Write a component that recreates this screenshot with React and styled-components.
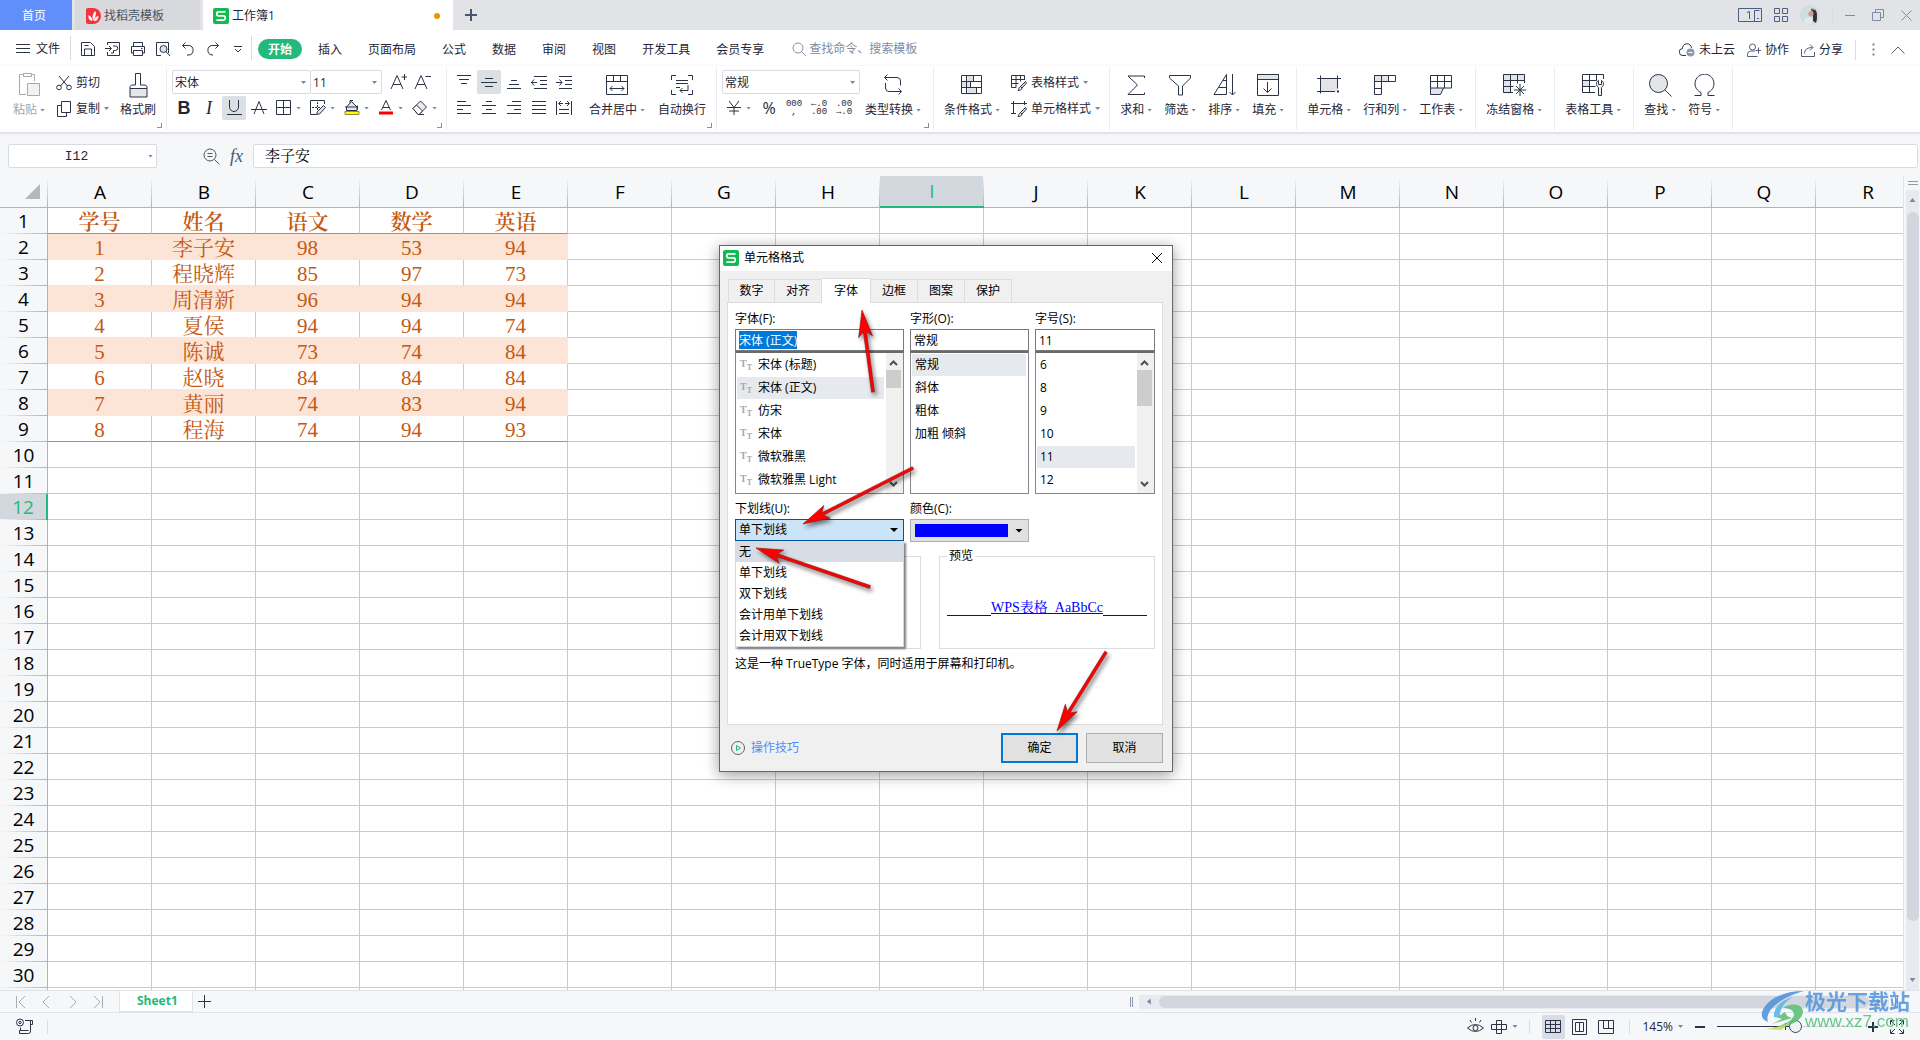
import { useEffect, useRef } from "react";
import styled, { createGlobalStyle, css } from "styled-components";

const ui = `"Open Sans", "Noto Sans CJK SC", sans-serif`;
const song = `"Liberation Serif", "Noto Serif CJK SC", "Noto Sans CJK SC", serif`;

const COLUMNS = "ABCDEFGHIJKLMNOPQR".split("");
const ROW_COUNT = 30;
const SCORES = [
  ["学号", "姓名", "语文", "数学", "英语"],
  ["1", "李子安", "98", "53", "94"],
  ["2", "程晓辉", "85", "97", "73"],
  ["3", "周清新", "96", "94", "94"],
  ["4", "夏侯", "94", "94", "74"],
  ["5", "陈诚", "73", "74", "84"],
  ["6", "赵晓", "84", "84", "84"],
  ["7", "黄丽", "74", "83", "94"],
  ["8", "程海", "74", "94", "93"],
];
const MENUS = ["开始", "插入", "页面布局", "公式", "数据", "审阅", "视图", "开发工具", "会员专享"];
const FONTS = ["宋体 (标题)", "宋体 (正文)", "仿宋", "宋体", "微软雅黑", "微软雅黑 Light"];
const STYLES = ["常规", "斜体", "粗体", "加粗 倾斜"];
const SIZES = ["6", "8", "9", "10", "11", "12"];
const UNDERLINES = ["无", "单下划线", "双下划线", "会计用单下划线", "会计用双下划线"];
const DIALOG_TABS = ["数字", "对齐", "字体", "边框", "图案", "保护"];

export default function App() {
  return (
    <Page>
      <GlobalStyle />
      <TitleBar />
      <MenuBar />
      <Ribbon />
      <FormulaBar />
      <Workspace>
        <Sheet />
        <VerticalScroll />
      </Workspace>
      <SheetTabs />
      <StatusBar />
      <FormatDialog />
      <Watermark />
    </Page>
  );
}

/* ---------- icons ---------- */

function Icon({ w = 16, h, children, color = "#2b3347" }) {
  const height = h || w;
  return (
    <Svg width={w} height={height} viewBox={`0 0 ${w} ${height}`} stroke={color} aria-hidden="true">
      {children}
    </Svg>
  );
}

const SaveIcon = () => (
  <Icon>
    <path d="M1.5 1.5h9l4 4v9h-13z M4.5 14v-6h7v6 M4.5 4.5h4" />
  </Icon>
);
const ExportIcon = () => (
  <Icon>
    <path d="M2.5 4V1.5h12v13h-12V11 M0 7.500h6 M4 5l2.500 2.500L4 10 M8 5h2.500a2 2 0 0 1 0 4.500H8.500V12H6" />
  </Icon>
);
const PrintIcon = () => (
  <Icon>
    <path d="M3.500 5V1.500h9V5 M3.500 12h-2V5.500h13V12h-2 M3.500 9.500h9v5h-9z M11 7.500h1.500" />
  </Icon>
);
const PreviewIcon = () => (
  <Icon>
    <path d="M6 14.500H1.500v-13h12V12" />
    <circle cx="8.500" cy="8" r="3.500" fill="#dfe2e8" />
    <path d="M11 10.500l4 4.500" />
  </Icon>
);
const UndoIcon = () => (
  <Icon>
    <path d="M5.500 1.500l-3 3 3 3 M2.500 4.500h6.500a4.800 4.800 0 0 1 0 9.500H7" />
  </Icon>
);
const RedoIcon = () => (
  <Icon>
    <path d="M10.500 1.500l3 3-3 3 M13.500 4.500H7a4.800 4.800 0 0 0 0 9.500h1" />
  </Icon>
);
const MoreIcon = () => (
  <Icon w={8}>
    <path d="M0 1.500h8 M1 4l3 3 3-3" />
  </Icon>
);
const PasteIcon = () => (
  <Icon w={22} h={24} color="#a9a9a9">
    <path d="M8 21.500H1.500v-20H5 M13 1.500h3.500V8" />
    <path d="M5.500 3.500v-3h8v3z" />
    <path d="M9.500 10.500h12v12h-12z" fill="#f2f2f2" />
  </Icon>
);
const CutIcon = () => (
  <Icon>
    <path d="M3 1l8.500 10 M13 1L4.500 11" />
    <circle cx="3" cy="12.500" r="2.300" />
    <circle cx="13" cy="12.500" r="2.300" />
  </Icon>
);
const CopyIcon = () => (
  <Icon>
    <path d="M5.500 0.500h9v11h-9z M5.500 4.500h-4v11h9v-4" />
  </Icon>
);
const BrushIcon = () => (
  <Icon w={19} h={25}>
    <path d="M1 15.500h17v8.500H1z" fill="#e4e6ea" />
    <path d="M1 15.500v-2l1.500-1.500H6.500V0.500h5V12H16l2 1.500v2" />
  </Icon>
);
const BordersIcon = () => (
  <Icon>
    <path d="M0.500 0.500h14v14h-14z M7.500 0.500v14 M0.500 7.500h14" />
  </Icon>
);
const DrawBorderIcon = () => (
  <Icon>
    <path d="M14.500 4V0.500h-14v14H6" />
    <path d="M7.500 2v8 M2 7.500h8" strokeDasharray="2 1" />
    <path d="M13.500 5.500l2 2-6 6.500-3 .5 1-3z" fill="#dfe2e8" />
  </Icon>
);
const FillIcon = () => (
  <Icon>
    <path d="M7.500 1.500l5.500 5.500v3.500H2.500V7z" fill="#e4e6ea" />
    <path d="M1 7h11.500 M6 3V0.500h3 M13.500 5.500v4" />
    <path d="M1 11.500h14v3H1z" fill="#ffff00" stroke="#8b8b45" />
  </Icon>
);
const EraserIcon = () => (
  <Icon>
    <path d="M1 8.500l7.500-7.500 6 6-7.500 7.500H6z" fill="#e8eaed" />
    <path d="M1 8.500l3.500-3.500 6 6-3.500 3.500H6z" fill="#fff" />
    <path d="M6 14.500h6" />
  </Icon>
);
const GrowIcon = ({ minus }) => (
  <Icon w={18}>
    <path d="M2 16L8 2.500 14 16 M4 11.500h8" />
    <path d={minus ? "M12.500 3.500H18" : "M12.500 4h5.500 M15.500 1v6"} />
  </Icon>
);
const lines = {
  top: "M1 1.500h14 M3 5.500h10 M5 9.500h6",
  middle: "M4 4.500h8 M0 8.500h16 M4 12.500h8",
  bottom: "M5 6.500h6 M3 10.500h10 M1 14.500h14",
  outdent: "M3 2.500h13 M9 6.500h7 M9 10.500h7 M3 14.500h13 M0 8.500h6 M3 5.500l-2.500 3 2.500 3",
  indent: "M3 2.500h13 M9 6.500h7 M9 10.500h7 M3 14.500h13 M0 8.500h6 M3.500 5.500l2.500 3-2.500 3",
  left: "M1 1.500h9 M1 5.500h14 M1 9.500h6 M1 13.500h14",
  center: "M5 1.500h6 M1 5.500h14 M5 9.500h6 M1 13.500h14",
  right: "M6 1.500h9 M1 5.500h14 M8 9.500h7 M1 13.500h14",
  justify: "M1 1.500h14 M1 5.500h14 M1 9.500h14 M1 13.500h14",
  spread: "M0.500 1v14 M15.500 1v14 M3 3.500h4 M9 3.500h4 M5 1L2.500 3.500 5 6 M11 1l2.500 2.500L11 6 M3 9.500h10 M3 13.500h10",
};
const LineIcon = ({ kind }) => (
  <Icon>
    <path d={lines[kind]} />
  </Icon>
);
const MergeIcon = () => (
  <Icon w={22} h={20}>
    <path d="M0.500 0.500h21v19h-21z M0.500 6.500h21 M7.500 0.500v6 M14.500 0.500v6 M4 13.500h14 M6.500 11L4 13.500 6.500 16 M15.500 11l2.500 2.500-2.500 2.500" />
  </Icon>
);
const WrapIcon = () => (
  <Icon w={22} h={20}>
    <path d="M5 0.500H0.500V5 M17 0.500h4.500V5 M0.500 15v4.500H5 M21.500 15v4.500H17 M5 5.500h12 M5 8.500h12 M5 12.500h4 M17 10v5.500H9 M11.500 13L9 15.500l2.500 2.500" />
  </Icon>
);
const ConvertIcon = () => (
  <Icon w={20} h={22}>
    <path d="M4.500 0.500l-3 3 3 3 M1.500 3.500H14a3.500 3.500 0 0 1 3.500 3.500v4.500 M15.500 14.500l3 3-3 3 M18.500 17.500H6A3.500 3.500 0 0 1 2.500 14V9" />
  </Icon>
);
const ConditionIcon = () => (
  <Icon w={22} h={20}>
    <path d="M6.500 0.500h6v6h-6z M0.500 6.500h9v6h-9z M6.500 12.500h9v7h-9z" fill="#dfe1e6" stroke="none" />
    <path d="M0.500 0.500h20v18h-20z M0.500 6.500h20 M0.500 12.500h20 M5.500 0.500v18 M12.500 0.500v6 M9.500 6.500v6 M15.500 12.500v6" />
  </Icon>
);
const TableStyleIcon = () => (
  <Icon>
    <path d="M5 12.500H0.500v-12h13V5 M0.500 4.500h13 M0.500 8.500h7 M5 0.500v12 M9.500 0.500v6" />
    <path d="M14.500 6.500l1 1.500-4.500 5-1.500-1.500z M9.500 11.500l1.500 1.500c0 2-2 2.500-4 2.500 1-1 .5-3 2.500-4z" fill="#dfe2e8" />
  </Icon>
);
const CellStyleIcon = () => (
  <Icon>
    <path d="M0 2.500h16 M2.500 0v13 M13.500 0v4 M0 12.500h5" />
    <path d="M14.500 6.500l1 1.500-4.500 5-1.500-1.500z M9.500 11.500l1.500 1.500c0 2-2 2.500-4 2.500 1-1 .5-3 2.500-4z" fill="#dfe2e8" />
  </Icon>
);
const SumIcon = () => (
  <Icon w={18} h={21}>
    <path d="M17.500 3V1H1l9.500 9L1 19.500h16.500v-2" />
  </Icon>
);
const FilterIcon = () => (
  <Icon w={22} h={21}>
    <path d="M0.500 0.500h21v2.500l-8 8v9h-4v-9l-9-8z" />
  </Icon>
);
const SortIcon = () => (
  <Icon w={23} h={22}>
    <path d="M1 20.500L13.500 0.500v20z M10 6.500h3.500 M6 13.500h7.500 M19.500 0v21 M16.500 18l3 3 3-3" />
  </Icon>
);
const FillDownIcon = () => (
  <Icon w={22} h={22}>
    <path d="M0.500 0.500h21v5h-21z" fill="#e2e4e8" />
    <path d="M0.500 0.500h21v21h-21z M10.500 8v10 M6.500 14.500l4 4 4-4" />
  </Icon>
);
const CellIcon = () => (
  <Icon w={24} h={20}>
    <path d="M3.500 3.500h17v13h-17z" fill="#e2e4e8" stroke="none" />
    <path d="M0 3.500h24 M3.500 0.500v18 M20.500 0.500v13 M0 16.500h18" />
    <path d="M20 15.500h2v2h-2z" fill="#2b3347" stroke="none" />
  </Icon>
);
const RowColIcon = () => (
  <Icon w={22} h={20}>
    <path d="M0.500 0.500h21v6H7.500v13h-7z" />
    <path d="M0.500 0.500h14v6h-14z" fill="#e2e4e8" />
    <path d="M7.500 0.500v6 M0.500 6.500h7 M0.500 13.500h7" />
  </Icon>
);
const WorksheetIcon = () => (
  <Icon w={22} h={20}>
    <path d="M0.500 13v6.500h10l3-6.500" fill="#e2e4e8" />
    <path d="M0.500 0.500h21v12.500h-21z M0.500 6.500h21 M7.500 0.500V13 M14.500 0.500V13" />
  </Icon>
);
const FreezeIcon = () => (
  <Icon w={23} h={22}>
    <path d="M0.500 0.500h21v6h-14v13h-7z" fill="#e2e4e8" stroke="none" />
    <path d="M21.500 9V0.500h-21v18H10 M0.500 6.500h21 M0.500 12.500h10 M7.500 0.500v18 M14.500 0.500v9 M17 10v12 M11 16h12 M13 12l8 8 M21 12l-8 8" />
  </Icon>
);
const TableToolIcon = () => (
  <Icon w={23} h={22}>
    <path d="M0.500 6.500h7v6h-7z" fill="#e2e4e8" stroke="none" />
    <path d="M21.500 5V0.500h-21v18H13 M0.500 6.500h14 M0.500 12.500h13 M7.500 0.500v18 M14.500 0.500v6" />
    <path d="M16.500 21.500v-8c-3-2-2.500-6 0-7v4h3v-4c2.500 1 3 5 0 7v8z" fill="#f0f1f3" />
  </Icon>
);
const FindIcon = () => (
  <Icon w={23} h={23}>
    <circle cx="9.500" cy="9.500" r="9" fill="#e4e5e8" />
    <path d="M16 16l6.500 6.500" />
  </Icon>
);
const OmegaIcon = () => (
  <Icon w={21} h={22}>
    <path d="M0.500 21.500H7v-3A9.500 9.500 0 1 1 14 18.500v3h6.500" />
  </Icon>
);
const SearchIcon = () => (
  <Icon w={14} color="#8692a8">
    <circle cx="6" cy="6" r="5" />
    <path d="M10 10l4 4" />
  </Icon>
);
const SheetLogo = () => (
  <Svg width="16" height="16" viewBox="0 0 16 16" aria-hidden="true">
    <rect width="16" height="16" rx="2" fill="#12bb52" />
    <path d="M12.500 3.800H5.500Q3.800 3.800 3.800 5.500V6.300Q3.800 7.900 5.500 7.900H10.600Q12.200 7.900 12.200 9.600V10.600Q12.200 12.200 10.600 12.200H3.500" stroke="#fff" strokeWidth="1.700" />
  </Svg>
);
const DocerLogo = () => (
  <Svg width="16" height="16" viewBox="0 0 16 16" aria-hidden="true">
    <path d="M3 0h5a8 8 0 0 1 0 16H3Q1 16 1 14V2Q1 0 3 0z" fill="#f5333f" />
    <path d="M8 13C7 9 8 5 10.500 3c1 4-.5 7-2.500 10z M7.200 13C3.500 12 3 9 3.500 7c2.500 1 3.700 3 3.700 6z M9 13c.5-3 2-4.500 4.500-5 0 3-1.500 5-4.500 5z" fill="#fff" />
  </Svg>
);
const Avatar = () => (
  <Svg width="20" height="20" viewBox="0 0 20 20" aria-label="头像">
    <circle cx="10" cy="10" r="10" fill="#cfdde2" />
    <path d="M11 4c4-1 6 2 6 6 0 3 0 5-1 8l-3-2 0-6z" fill="#3a2c33" />
    <path d="M8.500 8c1-3 5-3 5 0s-1 4-3 3.500-2.500-2-2-3.500z" fill="#cf9a94" />
    <path d="M4 17c0-3 2-5 7-5l2 6c-3 2-6 1-9-1z" fill="#dfe9ee" />
    <path d="M12 4l4 1" stroke="#d69c5c" />
  </Svg>
);

/* ---------- title bar ---------- */

function TitleBar() {
  return (
    <TopBar>
      <HomeTab>首页</HomeTab>
      <DocTab>
        <DocerLogo />
        找稻壳模板
      </DocTab>
      <DocTab $active>
        <SheetLogo />
        工作簿1
        <UnsavedDot />
      </DocTab>
      <NewTab aria-label="新建标签">
        <Icon w={12} color="#49546f">
          <path d="M6 0v12 M0 6h12" strokeWidth="2" />
        </Icon>
      </NewTab>
      <WindowTools>
        <Plain aria-label="工作区">
          <Icon w={24} h={14} color="#4b5d80">
            <path d="M0.500 0.500h23v13h-23z M21.500 2.500h-5v11 M19 10.500h2 M9 4.500l2.500-1v7.500" />
          </Icon>
        </Plain>
        <Plain aria-label="应用">
          <Icon w={14} color="#4b5d80">
            <path d="M0.500 0.500h5v5h-5z M8.500 0.500h5v5h-5z M0.500 8.500h5v5h-5z M8.500 8.500h5v5h-5z" />
          </Icon>
        </Plain>
        <Avatar />
        <Rule $h={20} />
        <Plain aria-label="最小化">
          <Icon w={10} color="#7e8aa6">
            <path d="M0 5.500h10" />
          </Icon>
        </Plain>
        <Plain aria-label="还原">
          <Icon w={12} color="#7e8aa6">
            <path d="M0.500 3.500h8v8h-8z M3.500 3V0.500h8v8H9" />
          </Icon>
        </Plain>
        <Plain aria-label="关闭">
          <Icon w={11} color="#7e8aa6">
            <path d="M0.500 0.500l10 10 M10.500 0.500l-10 10" />
          </Icon>
        </Plain>
      </WindowTools>
    </TopBar>
  );
}

/* ---------- menu ---------- */

function MenuBar() {
  return (
    <Menu>
      <FileButton>
        <Icon w={14} h={12}>
          <path d="M0 1.500h14 M0 5.500h14 M0 9.500h14" />
        </Icon>
        文件
      </FileButton>
      <Rule $h={24} />
      <QuickTools>
        <Quick aria-label="保存"><SaveIcon /></Quick>
        <Quick aria-label="输出为PDF"><ExportIcon /></Quick>
        <Quick aria-label="打印"><PrintIcon /></Quick>
        <Quick aria-label="打印预览"><PreviewIcon /></Quick>
        <Quick aria-label="撤销"><UndoIcon /></Quick>
        <Quick aria-label="恢复"><RedoIcon /></Quick>
        <Quick aria-label="更多"><MoreIcon /></Quick>
      </QuickTools>
      <Rule $h={24} />
      <MenuList>
        {MENUS.map((name, i) => (
          <MenuItem key={name} $active={i === 0}>{name}</MenuItem>
        ))}
      </MenuList>
      <Search>
        <SearchIcon />
        <input aria-label="查找命令" placeholder="查找命令、搜索模板" />
      </Search>
      <MenuRight>
        <MenuLink>
          <Icon>
            <path d="M7 13.500H4A3.500 3.500 0 0 1 3.500 6.500 4.500 4.500 0 0 1 12.500 6" />
            <circle cx="11.500" cy="10.500" r="4" fill="#8d99b3" stroke="none" />
            <path d="M9.500 10.500h4" stroke="#fff" />
          </Icon>
          未上云
        </MenuLink>
        <MenuLink>
          <Icon w={14} color="#566078">
            <circle cx="5.500" cy="4" r="3" />
            <path d="M10.500 13.500h-10v-2q0-3 3-3.500h4.500 M11.500 4.500v6 M8.500 7.500h5.500" />
          </Icon>
          协作
        </MenuLink>
        <MenuLink>
          <Icon w={14} color="#566078">
            <path d="M0.500 6v7.500h13V9 M3.500 10.500q0-6 8-6 M9 1.500l3 3-3 3" />
          </Icon>
          分享
        </MenuLink>
        <Rule $h={20} />
        <Plain aria-label="更多选项">
          <Icon w={3} h={13} color="none">
            <path d="M0.500 0.500h2v2h-2z M0.500 5.500h2v2h-2z M0.500 10.500h2v2h-2z" fill="#7e8494" />
          </Icon>
        </Plain>
        <Plain aria-label="收起功能区">
          <Icon w={14} h={8} color="#566078">
            <path d="M0.500 7.500l6.500-6.500 6.500 6.500" />
          </Icon>
        </Plain>
      </MenuRight>
    </Menu>
  );
}

/* ---------- ribbon ---------- */

function Big({ icon, label, caret = true, dim }) {
  return (
    <BigButton $dim={dim}>
      <BigIcon>{icon}</BigIcon>
      <BigLabel>
        {label}
        {caret && <Caret />}
      </BigLabel>
    </BigButton>
  );
}

function Small({ icon, label, caret = true }) {
  return (
    <SmallButton>
      {icon}
      {label}
      {caret && <Caret />}
    </SmallButton>
  );
}

function Ribbon() {
  return (
    <RibbonBar>
      <Group $pad="13px" $end="10px" $gap="11px">
        <Big icon={<PasteIcon />} label="粘贴" dim />
        <Stack>
          <Small icon={<CutIcon />} label="剪切" caret={false} />
          <Small icon={<CopyIcon />} label="复制" />
        </Stack>
        <Big icon={<BrushIcon />} label="格式刷" caret={false} />
        <Corner aria-label="剪贴板设置" />
      </Group>
      <Group $pad="5px" $end="4px">
        <Stack>
          <ToolRow>
            <Combo $w="139px">
              <select aria-label="字体"><option>宋体</option></select>
              <Caret />
            </Combo>
            <Combo $w="71px" $joined>
              <select aria-label="字号"><option>11</option></select>
              <Caret />
            </Combo>
            <ToolPair>
              <Tool aria-label="增大字号"><GrowIcon /></Tool>
              <Tool aria-label="减小字号"><GrowIcon minus /></Tool>
            </ToolPair>
          </ToolRow>
          <ToolRow $gap="1px">
            <Tool aria-label="加粗"><Bold>B</Bold></Tool>
            <Tool aria-label="倾斜"><Italic>I</Italic></Tool>
            <Tool aria-label="下划线" $on>
              <Icon>
                <path d="M3.500 0v7a4.500 4.500 0 0 0 9 0V0 M1 14.500h15" />
              </Icon>
            </Tool>
            <Tool aria-label="删除线">
              <Icon>
                <path d="M3 14L8 1.500 13 14 M0 9.500h16" />
              </Icon>
            </Tool>
            <CaretTools>
              <CaretTool aria-label="边框"><BordersIcon /><Caret /></CaretTool>
              <CaretTool aria-label="绘图边框"><DrawBorderIcon /><Caret /></CaretTool>
              <CaretTool aria-label="填充颜色"><FillIcon /><Caret /></CaretTool>
              <CaretTool aria-label="字体颜色">
                <Icon>
                  <path d="M3.500 10L8 0.500 12.500 10 M5 7.500h6" />
                  <path d="M1 11.500h14v3H1z" fill="#ff0000" stroke="none" />
                </Icon>
                <Caret />
              </CaretTool>
              <CaretTool aria-label="清除"><EraserIcon /><Caret /></CaretTool>
            </CaretTools>
          </ToolRow>
        </Stack>
        <Corner aria-label="字体设置" />
      </Group>
      <Group $pad="5px" $end="10px" $gap="13px">
        <Stack>
          <ToolRow $gap="1px">
            <Tool aria-label="顶端对齐"><LineIcon kind="top" /></Tool>
            <Tool aria-label="垂直居中" $on><LineIcon kind="middle" /></Tool>
            <Tool aria-label="底端对齐"><LineIcon kind="bottom" /></Tool>
            <Tool aria-label="减少缩进"><LineIcon kind="outdent" /></Tool>
            <Tool aria-label="增加缩进"><LineIcon kind="indent" /></Tool>
          </ToolRow>
          <ToolRow $gap="1px">
            <Tool aria-label="左对齐"><LineIcon kind="left" /></Tool>
            <Tool aria-label="水平居中"><LineIcon kind="center" /></Tool>
            <Tool aria-label="右对齐"><LineIcon kind="right" /></Tool>
            <Tool aria-label="两端对齐"><LineIcon kind="justify" /></Tool>
            <Tool aria-label="分散对齐"><LineIcon kind="spread" /></Tool>
          </ToolRow>
        </Stack>
        <Big icon={<MergeIcon />} label="合并居中" />
        <Big icon={<WrapIcon />} label="自动换行" caret={false} />
        <Corner aria-label="对齐设置" />
      </Group>
      <Group $pad="5px" $end="12px" $gap="5px">
        <Stack>
          <Combo $w="138px">
            <select aria-label="数字格式"><option>常规</option></select>
            <Caret />
          </Combo>
          <ToolRow $gap="1px">
            <CaretTool aria-label="货币">
              <Icon>
                <path d="M3 1l5 6.500L13 1 M8 7.500V15 M1 7.500h14 M3 11h10" />
              </Icon>
              <Caret />
            </CaretTool>
            <Tool aria-label="百分比"><Percent>%</Percent></Tool>
            <Tool aria-label="千位分隔"><Digits>000<br />,</Digits></Tool>
            <Tool aria-label="增加小数位"><Digits>←.0<br />.00</Digits></Tool>
            <Tool aria-label="减少小数位"><Digits>.00<br />→.0</Digits></Tool>
          </ToolRow>
        </Stack>
        <Big icon={<ConvertIcon />} label="类型转换" />
        <Corner aria-label="数字设置" />
      </Group>
      <Group $pad="10px" $end="9px" $gap="11px">
        <Big icon={<ConditionIcon />} label="条件格式" />
        <Stack>
          <Small icon={<TableStyleIcon />} label="表格样式" />
          <Small icon={<CellStyleIcon />} label="单元格样式" />
        </Stack>
      </Group>
      <Group $pad="10px" $end="12px" $gap="12px">
        <Big icon={<SumIcon />} label="求和" />
        <Big icon={<FilterIcon />} label="筛选" />
        <Big icon={<SortIcon />} label="排序" />
        <Big icon={<FillDownIcon />} label="填充" />
      </Group>
      <Group $pad="10px" $end="12px" $gap="12px">
        <Big icon={<CellIcon />} label="单元格" />
        <Big icon={<RowColIcon />} label="行和列" />
        <Big icon={<WorksheetIcon />} label="工作表" />
      </Group>
      <Group $pad="10px" $end="12px">
        <Big icon={<FreezeIcon />} label="冻结窗格" />
      </Group>
      <Group $pad="10px" $end="12px">
        <Big icon={<TableToolIcon />} label="表格工具" />
      </Group>
      <Group $pad="10px" $end="12px" $gap="12px">
        <Big icon={<FindIcon />} label="查找" />
        <Big icon={<OmegaIcon />} label="符号" />
      </Group>
    </RibbonBar>
  );
}

function FormulaBar() {
  return (
    <Formula>
      <NameBox>
        <input aria-label="名称框" defaultValue="I12" />
        <Caret />
      </NameBox>
      <FormulaTools>
        <Plain aria-label="浏览公式结果">
          <Icon w={17} color="#4b566f">
            <circle cx="7" cy="7" r="6" />
            <path d="M4.500 5.500h5 M4.500 8.500h5 M11.500 11.500l5 5" />
          </Icon>
        </Plain>
        <Fx aria-label="插入函数">fx</Fx>
      </FormulaTools>
      <FormulaInput aria-label="编辑栏" defaultValue="李子安" />
    </Formula>
  );
}

/* ---------- sheet ---------- */

function Sheet() {
  return (
    <SheetArea>
      <Grid>
        <colgroup>
          <col style={{ width: 48 }} />
          {COLUMNS.map((c) => <col key={c} style={{ width: 104 }} />)}
        </colgroup>
        <thead>
          <tr>
            <CornerCell>
              <Svg width="15" height="15" viewBox="0 0 15 15" aria-hidden="true">
                <path d="M15 0v15H0z" fill="#b5b7ba" />
              </Svg>
            </CornerCell>
            {COLUMNS.map((c) => (
              <ColHead key={c} scope="col" $on={c === "I"}>{c}</ColHead>
            ))}
          </tr>
        </thead>
        <tbody>
          {Array.from({ length: ROW_COUNT }, (_, r) => (
            <tr key={r}>
              <RowHead scope="row" $on={r === 11}>{r + 1}</RowHead>
              {COLUMNS.map((c, i) => {
                const value = SCORES[r] && SCORES[r][i];
                return value ? (
                  <DataCell key={c} $head={r === 0} $band={r % 2 === 1} $last={r === 8}>{value}</DataCell>
                ) : (
                  <Cell key={c} />
                );
              })}
            </tr>
          ))}
          <tr>
            <RowHead />
            {COLUMNS.map((c) => <Cell key={c} />)}
          </tr>
        </tbody>
      </Grid>
    </SheetArea>
  );
}

function VerticalScroll() {
  return (
    <VScroll>
      <SplitMark />
      <VTrack>
        <Arrow $dir="up" />
        <VThumb />
        <VRest />
        <Arrow $dir="down" />
      </VTrack>
    </VScroll>
  );
}

function SheetTabs() {
  return (
    <TabsRow>
      <SheetNav>
        {[
          ["第一张", "M1.500 0v12 M10 0L4 6l6 6"],
          ["上一张", "M8 0L2 6l6 6"],
          ["下一张", "M3 0l6 6-6 6"],
          ["最后一张", "M1 0l6 6-6 6 M9.500 0v12"],
        ].map(([label, d]) => (
          <Plain key={label} aria-label={label}>
            <Icon w={11} h={12} color="#a9adb5"><path d={d} /></Icon>
          </Plain>
        ))}
      </SheetNav>
      <ActiveSheet>Sheet1</ActiveSheet>
      <AddSheet aria-label="新建工作表">
        <Icon w={13}><path d="M6.500 0v13 M0 6.500h13" /></Icon>
      </AddSheet>
      <HScroll>
        <DragMark />
        <HTrack>
          <Arrow $dir="left" />
          <HThumb />
          <Arrow $dir="right" />
        </HTrack>
        <DragMark />
      </HScroll>
    </TabsRow>
  );
}

function StatusBar() {
  return (
    <Status>
      <StatusLeft>
        <Plain aria-label="录制宏">
          <Icon w={17}>
            <circle cx="4" cy="4.500" r="3.500" />
            <circle cx="4" cy="4.500" r="1.200" />
            <path d="M9 2.500h7.500v4h-2V13q0 2.500-2 2.500H3.500v-3h9 M4.500 12V9.500 M14.500 2.500v5" />
          </Icon>
        </Plain>
        <Rule $h={14} />
      </StatusLeft>
      <StatusRight>
        <ReadTools>
          <Plain aria-label="护眼模式">
            <Icon w={17}>
              <path d="M0.500 10q8-7 16 0-8 7-16 0z M8.500 0v3 M3 2l1.500 2.500 M14 2l-1.500 2.500" />
              <circle cx="8.500" cy="10" r="2.500" />
            </Icon>
          </Plain>
          <CaretPlain aria-label="阅读模式">
            <Icon>
              <path d="M5.500 1.500h5v13h-5z M0.500 5.500h15v5h-15z" />
            </Icon>
            <Caret />
          </CaretPlain>
        </ReadTools>
        <Rule $h={14} />
        <ViewGroup>
          <ViewButton aria-label="普通视图" $on>
            <Icon w={17}><path d="M0.500 2.500h15v12h-15z M0.500 6.500h15 M0.500 10.500h15 M5.500 2.500v12 M10.500 2.500v12" /></Icon>
          </ViewButton>
          <ViewButton aria-label="页面布局视图">
            <Icon w={16}><path d="M0.500 0.500h14v15h-14z M3.500 3.500h8v9h-8z M7.500 3.500v9" /></Icon>
          </ViewButton>
          <ViewButton aria-label="分页预览">
            <Icon w={16}><path d="M0.500 1.500h15v13h-15z M5.500 1.500v8h10 M10.500 1.500v8" /></Icon>
          </ViewButton>
        </ViewGroup>
        <Rule $h={14} />
        <CaretPlain>145%<Caret /></CaretPlain>
        <Plain aria-label="缩小">
          <Icon w={10}><path d="M0 5h10" strokeWidth="2" /></Icon>
        </Plain>
        <Zoom type="range" aria-label="缩放比例" min="0" max="100" defaultValue="55" />
        <Plain aria-label="放大">
          <Icon w={10}><path d="M0 5h10 M5 0v10" strokeWidth="2" /></Icon>
        </Plain>
        <Plain aria-label="全屏">
          <Icon w={14}>
            <path d="M0.500 4.500v-4h4 M9.500 0.500h4v4 M13.500 9.500v4h-4 M4.500 13.500h-4v-4 M1 1l4 4 M13 1L9 5 M13 13L9 9 M1 13l4-4" />
          </Icon>
        </Plain>
      </StatusRight>
    </Status>
  );
}

/* ---------- dialog ---------- */

function ListBox({ label, items, selected, icons, thumb }) {
  return (
    <ListFrame>
      <List role="listbox" aria-label={label}>
        {items.map((item) => (
          <ListItem key={item} role="option" aria-selected={item === selected} $on={item === selected}>
            {icons && <TypeMark aria-hidden="true">T<small>T</small></TypeMark>}
            {item}
          </ListItem>
        ))}
      </List>
      {thumb && (
        <ListScroll>
          <Icon w={9} h={6} color="#505050"><path d="M1 5l3.500-3.500L8 5" strokeWidth="2" /></Icon>
          <ListThumb $h={thumb} />
          <Icon w={9} h={6} color="#505050"><path d="M1 1l3.500 3.500L8 1" strokeWidth="2" /></Icon>
        </ListScroll>
      )}
    </ListFrame>
  );
}

function FormatDialog() {
  const fontInput = useRef(null);

  useEffect(() => {
    fontInput.current.focus();
    fontInput.current.select();
  }, []);

  return (
    <Dialog role="dialog" aria-labelledby="dialog-title">
      <DialogTitle>
        <SheetLogo />
        <span id="dialog-title">单元格格式</span>
        <CloseButton aria-label="关闭对话框">
          <Icon w={12} color="#111"><path d="M1 1l10 10 M11 1L1 11" /></Icon>
        </CloseButton>
      </DialogTitle>
      <DialogBody>
        <DialogTabs role="tablist">
          {DIALOG_TABS.map((t) => (
            <DialogTab key={t} role="tab" aria-selected={t === "字体"} $on={t === "字体"}>{t}</DialogTab>
          ))}
        </DialogTabs>
        <Panel>
          <Columns>
            <Field>
              <label htmlFor="font">字体(F):</label>
              <TextInput id="font" ref={fontInput} defaultValue="宋体 (正文)" />
              <ListBox label="字体" items={FONTS} selected="宋体 (正文)" icons thumb={18} />
            </Field>
            <Field>
              <label htmlFor="style">字形(O):</label>
              <TextInput id="style" defaultValue="常规" />
              <ListBox label="字形" items={STYLES} selected="常规" />
            </Field>
            <Field>
              <label htmlFor="size">字号(S):</label>
              <TextInput id="size" defaultValue="11" />
              <ListBox label="字号" items={SIZES} selected="11" thumb={36} />
            </Field>
            <Field>
              <label htmlFor="underline">下划线(U):</label>
              <UnderlineBox>
                <select id="underline" defaultValue="单下划线">
                  {UNDERLINES.map((u) => <option key={u}>{u}</option>)}
                </select>
                <BigCaret />
                <Options>
                  {UNDERLINES.map((u, i) => <Option key={u} $on={i === 0}>{u}</Option>)}
                </Options>
              </UnderlineBox>
            </Field>
            <Field>
              <label htmlFor="color">颜色(C):</label>
              <ColorButton id="color">
                <Swatch />
                <BigCaret />
              </ColorButton>
            </Field>
          </Columns>
          <Boxes>
            <Effects aria-label="特殊效果" />
            <Preview>
              <legend>预览</legend>
              <Sample>
                <SampleLine />
                <u>WPS表格&nbsp;&nbsp;AaBbCc</u>
                <SampleLine />
              </Sample>
            </Preview>
          </Boxes>
          <Note>这是一种 TrueType 字体，同时适用于屏幕和打印机。</Note>
        </Panel>
        <DialogFooter>
          <TipLink href="#tips">
            <Icon w={14} color="#5d6470">
              <circle cx="7" cy="7" r="6.500" />
              <path d="M5.500 4.500L9.500 7l-4 2.500z" stroke="#1fbb7d" />
            </Icon>
            操作技巧
          </TipLink>
          <DialogButton $primary>确定</DialogButton>
          <DialogButton>取消</DialogButton>
        </DialogFooter>
      </DialogBody>
      <Pointers />
    </Dialog>
  );
}

// [tipX, tipY, tailX, tailY] relative to the dialog
const POINTERS = [
  [142, 64, 153, 146],
  [83, 278, 193, 222],
  [36, 302, 150, 341],
  [337, 485, 386, 406],
];

function Pointers() {
  return (
    <PointerLayer viewBox="0 0 454 526" aria-hidden="true">
      {POINTERS.map(([x, y, tx, ty]) => {
        const len = Math.hypot(tx - x, ty - y);
        const angle = (Math.atan2(ty - y, tx - x) * 180) / Math.PI;
        return (
          <g key={x} transform={`translate(${x} ${y}) rotate(${angle})`}>
            <path d={`M0 0L27 -7L22 -1.500H${len}V1.500H22L27 7z`} fill="#ff0000" stroke="#8c1a1a" strokeWidth="0.600" strokeLinejoin="round" />
          </g>
        );
      })}
    </PointerLayer>
  );
}

function Watermark() {
  return (
    <Mark>
      <Svg width="44" height="40" viewBox="0 0 44 40" aria-hidden="true">
        <path d="M43 1C22 1 6 9 1 22c-1 5 1 8 6 10C4 24 12 10 43 1z" fill="#4f93dc" />
        <path d="M32 7C20 10 12 18 13 27l6 1C18 20 23 12 32 7z" fill="#58b6ea" />
        <path d="M22 18c6-5 19-5 20 3 0 10-14 17-37 18 14-2 26-7 28-14 0-5-5-7-11-7z" fill="#5cc077" />
        <path d="M24 22l-8 5 5 2-10 5 20-6-5-2z" fill="#5cc077" />
        <path d="M5 39c10-1 18-3 24-7l-8 8z" fill="#cddc5c" />
      </Svg>
      <MarkText>
        <strong>极光下载站</strong>
        <span>www.xz7.com</span>
      </MarkText>
    </Mark>
  );
}

/* ---------- styles ---------- */

const GlobalStyle = createGlobalStyle`
  * { box-sizing: border-box; }
  body {
    margin: 0;
    overflow: hidden;
    font: 12px/16px ${ui};
    color: #1f2738;
  }
  button, input, select {
    font: inherit;
    color: inherit;
    margin: 0;
    padding: 0;
    border: 0;
    background: none;
    outline: none;
  }
  button { white-space: nowrap; }
  select { appearance: none; }
`;

const Page = styled.div`
  position: relative;
  display: flex;
  flex-direction: column;
  height: 100vh;
  overflow: hidden;
  background: #f5f7f9;
`;

const Svg = styled.svg`
  display: block;
  flex: none;
  fill: none;
`;

const Plain = styled.button`
  display: flex;
  align-items: center;
  justify-content: center;
`;

const CaretPlain = styled(Plain)`
  gap: 5px;
`;

const Rule = styled.span`
  flex: none;
  width: 1px;
  height: ${(p) => p.$h}px;
  background: #d9dce3;
`;

const Caret = styled.span`
  flex: none;
  width: 5px;
  height: 3px;
  background: #7a86a0;
  clip-path: polygon(0 0, 100% 0, 50% 100%);
`;

const TopBar = styled.header`
  display: flex;
  flex: none;
  height: 30px;
  background: #e1e3e7;
`;

const HomeTab = styled.button`
  width: 72px;
  margin-right: 3px;
  padding: 2px 4px 0 0;
  background: #608ffb;
  color: #fff;
`;

const DocTab = styled.button`
  display: flex;
  align-items: center;
  gap: 3px;
  width: 125px;
  margin-right: 3px;
  padding: 2px 0 0 10px;
  background: #d8d9dc;
  color: #4a5266;

  ${(p) =>
    p.$active &&
    css`
      width: 250px;
      margin: 0;
      background: #fff;
      color: #1f2738;
    `}
`;

const UnsavedDot = styled.i`
  width: 6px;
  height: 6px;
  margin: 0 13px 0 auto;
  border-radius: 50%;
  background: #e69a00;
`;

const NewTab = styled(Plain)`
  width: 36px;
`;

const WindowTools = styled.div`
  display: flex;
  align-items: center;
  gap: 12px;
  margin-left: auto;
  padding-right: 8px;

  ${Plain}:nth-last-child(-n + 2) {
    margin-left: 5px;
  }
`;

const Menu = styled.nav`
  display: flex;
  flex: none;
  align-items: center;
  height: 36px;
  background: #fff;
`;

const FileButton = styled.button`
  display: flex;
  align-items: center;
  gap: 6px;
  padding: 2px 10px 0 16px;
`;

const QuickTools = styled.div`
  display: flex;
  padding: 2px 1px 0 4px;
`;

const Quick = styled(Plain)`
  width: 25px;
  height: 24px;
`;

const MenuList = styled.div`
  display: flex;
  padding: 2px 0 0 3px;
`;

const MenuItem = styled.button`
  height: 20px;
  margin: 0 3px;
  padding: 2px 10px 0;
  border-radius: 10px;

  ${(p) =>
    p.$active &&
    css`
      background: #22b97c;
      color: #fff;
      font-weight: 700;
    `}
`;

const Search = styled.label`
  display: flex;
  align-items: center;
  gap: 3px;
  margin-left: 15px;
  padding-top: 2px;

  input {
    width: 130px;
  }

  input::placeholder {
    color: #7f8ba3;
    opacity: 1;
  }
`;

const MenuRight = styled.div`
  display: flex;
  align-items: center;
  gap: 12px;
  margin-left: auto;
  padding: 3px 15px 0 0;

  & > ${Plain} {
    margin-left: 4px;
  }
`;

const MenuLink = styled.button`
  display: flex;
  align-items: center;
  gap: 4px;
`;

const RibbonBar = styled.section`
  position: relative;
  display: flex;
  flex: none;
  height: 66px;
  padding: 2px 0;
  background: #fff;
  box-shadow: 0 1px 3px rgba(40, 50, 70, 0.18);
`;

const Group = styled.div`
  position: relative;
  display: flex;
  flex: none;
  gap: ${(p) => p.$gap || 0};
  padding: 2px ${(p) => p.$end} 0 ${(p) => p.$pad};
  border-right: 1px solid #ebecef;
`;

const Corner = styled.button`
  position: absolute;
  right: 4px;
  bottom: 2px;
  width: 5px;
  height: 5px;
  border: solid #8590a8;
  border-width: 0 1px 1px 0;
`;

const Stack = styled.div`
  display: flex;
  flex-direction: column;
  gap: 2px;
`;

const BigButton = styled.button`
  display: flex;
  flex-direction: column;
  align-items: center;
  height: 50px;
  color: ${(p) => (p.$dim ? "#a3a6ad" : "inherit")};
`;

const BigIcon = styled.span`
  display: flex;
  align-items: center;
  height: 30px;
`;

const BigLabel = styled.span`
  display: flex;
  align-items: center;
  gap: 3px;
  height: 20px;
`;

const SmallButton = styled.button`
  display: flex;
  align-items: center;
  gap: 4px;
  height: 24px;
  padding-top: 1px;
`;

const ToolRow = styled.div`
  display: flex;
  gap: ${(p) => p.$gap || 0};
`;

const ToolPair = styled.div`
  display: flex;
  padding-left: 4px;
`;

const Tool = styled(Plain)`
  width: 24px;
  height: 24px;
  border-radius: 2px;
  background: ${(p) => (p.$on ? "#dbe0e5" : "none")};
`;

const CaretTools = styled.div`
  display: flex;
`;

const CaretTool = styled(Plain)`
  gap: 4px;
  width: 34px;
  height: 24px;
  padding-right: 1px;
`;

const Bold = styled.b`
  font: 700 18px/24px "Liberation Sans", sans-serif;
`;

const Italic = styled.i`
  font: italic 18px/24px "Liberation Serif", serif;
`;

const Percent = styled.span`
  font-size: 16px;
`;

const Digits = styled.span`
  font: 9px/8px "Liberation Mono", monospace;
`;

const Combo = styled.span`
  display: flex;
  align-items: center;
  width: ${(p) => p.$w};
  height: 24px;
  padding: 1px 4px 0 2px;
  border: 1px solid #d8dbe1;
  border-left-width: ${(p) => (p.$joined ? 0 : "1px")};
  border-radius: 2px;

  select {
    flex: 1;
    min-width: 0;
  }
`;

const Formula = styled.section`
  display: flex;
  flex: none;
  align-items: flex-start;
  height: 44px;
  padding: 12px 2px 0 8px;
`;

const NameBox = styled.div`
  display: flex;
  align-items: center;
  width: 149px;
  height: 24px;
  padding-right: 3px;
  border: 1px solid #d8dbe1;
  border-radius: 2px;
  background: #fff;

  input {
    flex: 1;
    min-width: 0;
    padding: 2px 4px 0 0;
    font: 13px/20px "Liberation Mono", monospace;
    text-align: center;
  }
`;

const FormulaTools = styled.div`
  display: flex;
  align-items: center;
  justify-content: flex-end;
  gap: 10px;
  width: 96px;
  height: 24px;
  padding-right: 10px;
`;

const Fx = styled.button`
  color: #4b566f;
  font: italic 18px/22px "Liberation Serif", serif;
`;

const FormulaInput = styled.input`
  flex: 1;
  min-width: 0;
  height: 24px;
  padding: 0 11px 4px;
  border: 1px solid #d8dbe1;
  border-radius: 2px;
  background: #fff;
  color: #000;
  font: 15px/18px ${song};
`;

const Workspace = styled.main`
  display: flex;
  flex: 1;
  min-height: 0;
`;

const SheetArea = styled.div`
  flex: 1;
  min-width: 0;
  overflow: hidden;
  background: #fff;
`;

const Grid = styled.table`
  width: 1920px;
  table-layout: fixed;
  border-collapse: separate;
  border-spacing: 0;

  th,
  td {
    height: 26px;
    padding: 0;
    text-align: center;
    white-space: nowrap;
  }
`;

const CornerCell = styled.td`
  background: linear-gradient(#f5f7f9, #a9b4ca) right / 1px 100% no-repeat #f5f7f9;
  border-bottom: 1px solid #a9b4ca;

  && {
    height: 32px;
    padding-left: 25px;
  }
`;

const ColHead = styled.th`
  background: linear-gradient(#f5f7f9, #a9b4ca) right / 1px 100% no-repeat ${(p) => (p.$on ? "#d3d7de" : "#f5f7f9")};
  border-bottom: ${(p) => (p.$on ? "2px solid #22b97c" : "1px solid #a9b4ca")};
  color: ${(p) => (p.$on ? "#22b97c" : "#000")};
  font: 400 19px/26px ${ui};
`;

const RowHead = styled.th`
  background: linear-gradient(to right, #f5f7f9, #a9b4ca) bottom / 100% 1px no-repeat ${(p) => (p.$on ? "#d3d7de" : "#f5f7f9")};
  border-right: ${(p) => (p.$on ? "2px solid #22b97c" : "1px solid #a9b4ca")};
  color: ${(p) => (p.$on ? "#22b97c" : "#000")};
  font: 400 19px/24px ${ui};
`;

const Cell = styled.td`
  border: solid #c4cadb;
  border-width: 0 1px 1px 0;
`;

const DataCell = styled(Cell)`
  border-right-color: ${(p) => (p.$band ? "#fce4d6" : "#c4cadb")};
  border-bottom-color: ${(p) => (p.$head || p.$last ? "#ed7d31" : "#fce4d6")};
  background: ${(p) => (p.$band ? "#fce4d6" : "#fff")};
  color: #c65911;
  font: ${(p) => (p.$head ? 600 : 400)} 21px/21px ${song};

  && {
    padding-top: 4px;
  }
`;

const VScroll = styled.div`
  display: flex;
  flex: none;
  flex-direction: column;
  width: 17px;
  padding: 5px 1px 0 2px;
  border-left: 1px solid #dfe2e8;
`;

const SplitMark = styled.span`
  flex: none;
  width: 10px;
  height: 4px;
  margin: 0 2px 5px;
  border: solid #8d99b3;
  border-width: 1px 0;
`;

const VTrack = styled.div`
  display: flex;
  flex: 1;
  flex-direction: column;
  align-items: center;
  padding: 8px 1px;
  background: #e8eaef;
`;

const VThumb = styled.div`
  flex: 711;
  width: 12px;
  margin-top: 10px;
  border-radius: 6px;
  background: #d3d6de;
`;

const VRest = styled.div`
  flex: 57;
`;

const shapes = {
  up: "polygon(50% 0, 100% 100%, 0 100%)",
  down: "polygon(0 0, 100% 0, 50% 100%)",
  left: "polygon(100% 0, 100% 100%, 0 50%)",
  right: "polygon(0 0, 100% 50%, 0 100%)",
};

const Arrow = styled.span`
  flex: none;
  width: ${(p) => (p.$dir === "up" || p.$dir === "down" ? 6 : 4)}px;
  height: ${(p) => (p.$dir === "up" || p.$dir === "down" ? 4 : 6)}px;
  background: #7d8aa8;
  clip-path: ${(p) => shapes[p.$dir]};
`;

const TabsRow = styled.div`
  display: flex;
  flex: none;
  height: 22px;
  border-top: 1px solid #dfe2e8;
`;

const SheetNav = styled.div`
  display: flex;
  align-items: center;
  gap: 15px;
  width: 119px;
  padding-left: 15px;
`;

const ActiveSheet = styled.button`
  padding: 0 14px 0 17px;
  border: 1px solid #dfe2e8;
  border-top: 0;
  background: #fff;
  color: #22b97c;
  font-weight: 700;
`;

const AddSheet = styled(Plain)`
  width: 24px;
`;

const HScroll = styled.div`
  display: flex;
  align-items: center;
  gap: 6px;
  width: calc(41% + 3px);
  margin-left: auto;
  padding: 0 22px 0 0;
`;

const DragMark = styled.span`
  flex: none;
  width: 3px;
  height: 10px;
  border: solid #8d99b3;
  border-width: 0 1px;
`;

const HTrack = styled.div`
  display: flex;
  flex: 1;
  align-items: center;
  gap: 8px;
  height: 14px;
  padding: 0 8px;
  background: #e8eaef;
`;

const HThumb = styled.div`
  flex: 1;
  height: 12px;
  border-radius: 6px;
  background: #d3d6de;
`;

const Status = styled.footer`
  display: flex;
  flex: none;
  align-items: center;
  justify-content: space-between;
  height: 28px;
  border-top: 1px solid #dfe2e8;
`;

const StatusLeft = styled.div`
  display: flex;
  align-items: center;
  gap: 14px;
  padding-left: 16px;
`;

const StatusRight = styled.div`
  display: flex;
  align-items: center;
  gap: 12px;
  padding-right: 16px;
`;

const ReadTools = styled.div`
  display: flex;
  gap: 7px;
`;

const ViewGroup = styled.div`
  display: flex;
  gap: 3px;
`;

const ViewButton = styled(Plain)`
  width: 23px;
  height: 24px;
  border-radius: 2px;
  background: ${(p) => (p.$on ? "#d8dce4" : "none")};
`;

const Zoom = styled.input`
  width: 144px;
  height: 14px;
  margin-right: -5px;
  appearance: none;
  background:
    linear-gradient(#2b3347, #2b3347) 68px center / 1px 7px no-repeat,
    linear-gradient(to right, #2b3347 50%, #cfd3db 50%) center / 100% 1px no-repeat;

  &::-webkit-slider-thumb {
    appearance: none;
    width: 13px;
    height: 13px;
    border: 1px solid #454545;
    border-radius: 50%;
    background: #f3f2f2;
  }
`;

const Dialog = styled.section`
  position: absolute;
  left: 719px;
  top: 245px;
  width: 454px;
  border: 1px solid #63666c;
  background: #f0f0f0;
  color: #000;
  box-shadow: 0 3px 14px rgba(0, 0, 0, 0.4);
`;

const DialogTitle = styled.div`
  display: flex;
  align-items: center;
  gap: 5px;
  height: 25px;
  padding: 0 9px 2px 3px;
  background: #fff;
`;

const CloseButton = styled(Plain)`
  margin-left: auto;
`;

const DialogBody = styled.div`
  padding: 7px 9px 8px 7px;
`;

const DialogTabs = styled.div`
  display: flex;
  align-items: flex-end;
  height: 24px;
  padding-left: 1px;
`;

const DialogTab = styled.button`
  width: ${(p) => (p.$on ? 49 : 47)}px;
  height: ${(p) => (p.$on ? 25 : 23)}px;
  margin-bottom: ${(p) => (p.$on ? -1 : 0)}px;
  border: 1px solid #dcdcdc;
  border-bottom: 0;
  background: ${(p) => (p.$on ? "#fff" : "#f0f0f0")};

  & + & {
    border-left: 0;
  }
`;

const Panel = styled.div`
  min-height: 423px;
  padding: 8px 7px 0;
  border: 1px solid #dcdcdc;
  background: #fff;
`;

const Columns = styled.div`
  display: grid;
  grid-template-columns: 169fr 119fr 120fr;
  gap: 7px 6px;
`;

const Field = styled.div`
  display: flex;
  flex-direction: column;
  min-width: 0;

  & > label {
    height: 18px;
  }
`;

const TextInput = styled.input`
  width: 100%;
  height: 22px;
  padding: 0 3px;
  border: 1px solid #7a7a7a;
  background: #fff;

  &::selection {
    background: #0078d7;
    color: #fff;
  }
`;

const ListFrame = styled.div`
  display: flex;
  height: 143px;
  border: 1px solid #828790;
  border-top: 2px solid #696969;
`;

const List = styled.ul`
  display: flex;
  flex: 1;
  flex-direction: column;
  gap: 1px;
  min-width: 0;
  margin: 0;
  padding: 1px 2px 0 1px;
  list-style: none;
`;

const ListItem = styled.li`
  display: flex;
  align-items: center;
  height: 22px;
  padding-left: 3px;
  white-space: nowrap;
  background: ${(p) => (p.$on ? "#e6e9ee" : "none")};
`;

const TypeMark = styled.span`
  width: 18px;
  color: #a8a8a8;
  font: 700 10px/12px "Liberation Serif", serif;

  small {
    font-size: 8px;
    line-height: 8px;
    vertical-align: sub;
  }
`;

const ListScroll = styled.div`
  display: flex;
  flex: none;
  flex-direction: column;
  align-items: center;
  width: 17px;
  padding: 7px 2px 6px 0;
  background: #f0f0f0;
`;

const ListThumb = styled.span`
  width: 15px;
  height: ${(p) => p.$h}px;
  margin: 4px 0 auto;
  background: #cdcdcd;
`;

const UnderlineBox = styled.div`
  position: relative;
  display: flex;
  align-items: center;
  height: 22px;
  padding: 0 5px 0 3px;
  border: 1px solid #005499;
  background: #cce4f7;

  select {
    flex: 1;
  }
`;

const BigCaret = styled.span`
  flex: none;
  width: 8px;
  height: 4px;
  background: #000;
  clip-path: polygon(0 0, 100% 0, 50% 100%);
`;

const Options = styled.ul`
  position: absolute;
  z-index: 1;
  top: 21px;
  left: -1px;
  right: -1px;
  margin: 0;
  padding: 0;
  border: solid #d5d8dd;
  border-width: 0 1px 1px;
  background: #fff;
  box-shadow: 2px 2px 2px rgba(0, 0, 0, 0.5);
  list-style: none;
`;

const Option = styled.li`
  height: 21px;
  padding-left: 3px;
  line-height: 21px;
  background: ${(p) => (p.$on ? "#d8dce4" : "none")};
`;

const ColorButton = styled.button`
  display: flex;
  align-items: center;
  justify-content: space-between;
  height: 23px;
  padding: 0 5px 0 4px;
  border: 1px solid #adadad;
  background: #e1e1e1;
`;

const Swatch = styled.span`
  width: 93px;
  height: 13px;
  background: #0000ff;
`;

const Boxes = styled.div`
  display: grid;
  grid-template-columns: 186fr 216fr;
  gap: 18px;
  padding-top: 6px;
`;

const Effects = styled.fieldset`
  min-width: 0;
  margin: 8px 0 0;
  padding: 0;
  border: 1px solid #dcdcdc;
`;

const Preview = styled.fieldset`
  min-width: 0;
  height: 101px;
  margin: 0;
  padding: 0 7px;
  border: 1px solid #dcdcdc;

  legend {
    padding: 0 2px;
  }
`;

const Sample = styled.div`
  display: flex;
  align-items: flex-end;
  padding-top: 35px;
  color: #0000ff;
  font: 14px/17px ${song};
`;

const SampleLine = styled.span`
  flex: 1;
  border-bottom: 1px solid #0000ff;
`;

const Note = styled.p`
  margin: 0;
  padding-top: 7px;
`;

const DialogFooter = styled.div`
  display: flex;
  align-items: center;
  gap: 8px;
  padding: 8px 0 0 4px;
`;

const TipLink = styled.a`
  display: flex;
  align-items: center;
  gap: 6px;
  margin-right: auto;
  color: #4d8ff5;
  text-decoration: none;
`;

const DialogButton = styled.button`
  width: 77px;
  height: 30px;
  border: ${(p) => (p.$primary ? "2px solid #0078d7" : "1px solid #adadad")};
  background: #e1e1e1;
`;

const PointerLayer = styled.svg`
  position: absolute;
  z-index: 2;
  left: 0;
  top: 0;
  width: 454px;
  height: 526px;
  pointer-events: none;
  filter: drop-shadow(2px 3px 2px rgba(0, 0, 0, 0.5));
`;

const Mark = styled.div`
  position: absolute;
  right: 10px;
  bottom: 8px;
  display: flex;
  opacity: 0.88;
  pointer-events: none;
`;

const MarkText = styled.div`
  display: flex;
  flex-direction: column;

  strong {
    color: #5598dc;
    font-size: 21px;
    line-height: 22px;
  }

  span {
    color: #55c07c;
    font: 17px/20px "Liberation Sans", sans-serif;
  }
`;
